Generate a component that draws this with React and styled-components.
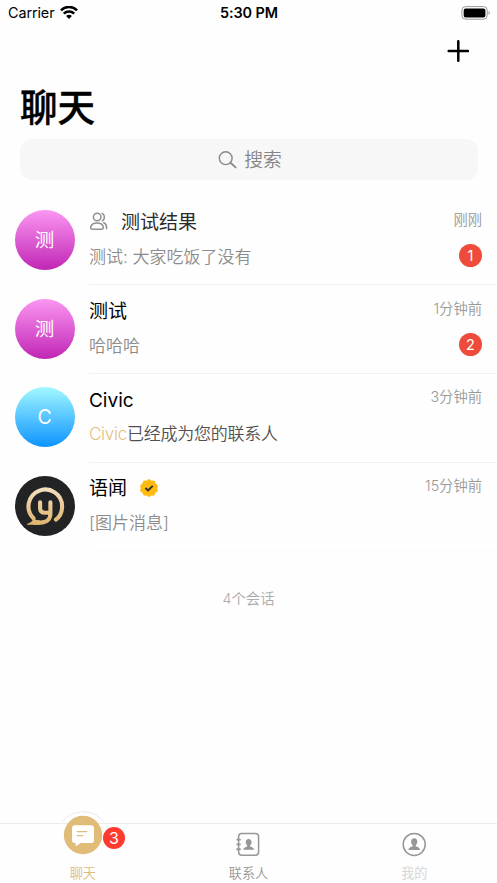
import React from "react"
import styled, {createGlobalStyle} from "styled-components"

const GlobalStyle = createGlobalStyle`
  * {
    box-sizing: border-box;
  }

  body {
    margin: 0;
    background: #fefefe;
    font-family: Inter, "Noto Sans CJK SC", sans-serif;
  }

  svg {
    display: block;
    flex: none;
  }
`;

const Screen = styled.div`
  display: flex;
  flex-direction: column;
  width: 497px;
  height: 883px;
  overflow: hidden;
  background: #fefefe;
`;

const StatusBar = styled.div`
  display: grid;
  grid-template-columns: 1fr auto 1fr;
  align-items: center;
  height: 25px;
  padding: 0 6px 0 8px;
  color: #000;
  font-size: 14.4px;
  line-height: 25px;
`;

const Carrier = styled.div`
  display: flex;
  align-items: center;
  gap: 6px;
  letter-spacing: -0.1px;
`;

const Clock = styled.span`
  font-weight: 600;
  letter-spacing: -0.05px;
  margin-left: -1px;
`;

const BatterySlot = styled.div`
  display: flex;
  justify-content: flex-end;
`;

const NavBar = styled.div`
  display: flex;
  align-items: center;
  justify-content: flex-end;
  height: 52px;
  padding-right: 28px;
`;

const Title = styled.h1`
  height: 62px;
  margin: 0;
  padding-left: 20px;
  color: #000;
  font-size: 37.6px;
  font-weight: 500;
  line-height: 62px;
  -webkit-text-stroke: 0.4px #000;
`;

const SearchBox = styled.div`
  display: flex;
  flex: none;
  align-items: center;
  justify-content: center;
  gap: 7px;
  height: 41px;
  margin: 0 19px 0 20px;
  padding-left: 2px;
  border-radius: 12px;
  background: #f7f7f7;
  color: #858587;
  font-size: 18.8px;
  font-weight: 350;
  line-height: 40px;
`;

const SearchText = styled.span`
  padding-top: 3px;
`;

const List = styled.div`
  display: flex;
  flex-direction: column;
  padding-top: 16.5px;
`;

const Row = styled.div`
  display: flex;
  height: 88.7px;
  padding-left: 14.6px;
  gap: 14.4px;
`;

const Avatar = styled.div`
  display: flex;
  flex: none;
  align-items: center;
  justify-content: center;
  width: 60px;
  height: 60px;
  margin-top: 13.5px;
  border-radius: 50%;
  overflow: hidden;
  background: ${props => props.$fill};
  color: white;
  font-size: 19.5px;
  font-weight: 400;
  line-height: 58px;
`;

const Body = styled.div`
  display: flex;
  flex: 1;
  flex-direction: column;
  padding: 10.5px 15px 0 0;
  border-bottom: 1px solid ${props => props.$last ? "#fbfbfb" : "#f1f1f1"};
`;

const Line = styled.div`
  display: flex;
  align-items: center;
  justify-content: space-between;
  height: ${props => props.$height}px;
`;

const Name = styled.div`
  display: flex;
  align-items: center;
  gap: 13px;
  color: ${props => props.$soft ? "#2b2b2b" : "#000"};
  font-size: 19px;
  line-height: 30px;
`;

const NameText = styled.span`
  padding-top: 2.5px;
`;

const Time = styled.span`
  color: #989898;
  font-size: 14.3px;
  font-weight: 350;
  line-height: 20px;
  margin-top: -4px;
`;

const Preview = styled.span`
  padding-top: 3px;
  color: ${props => props.$dark ? "#505050" : "#8c8c8c"};
  font-size: 17px;
  font-weight: 350;
  letter-spacing: ${props => props.$dark ? "-0.25px" : "0"};
  line-height: 26px;
`;

const Mention = styled.span`
  color: #e3bf7e;
`;

const Unread = styled.span`
  width: 23px;
  height: 23px;
  border-radius: 50%;
  background: #ee4b3a;
  color: white;
  font-size: 14.5px;
  line-height: 23px;
  text-align: center;
`;

const Summary = styled.div`
  flex: 1;
  padding-top: 38px;
  color: #acacac;
  font-size: 14.4px;
  font-weight: 350;
  line-height: 20px;
  text-align: center;
`;

const TabBar = styled.div`
  display: flex;
  flex: none;
  height: 60px;
  border-top: 1px solid #ececec;
`;

const Tab = styled.div`
  display: flex;
  flex: 1;
  flex-direction: column;
  align-items: center;
  justify-content: space-between;
  position: relative;
  padding: 8px 0 0;
  color: ${props => props.$color};
  font-size: 13.2px;
  font-weight: 350;
  line-height: 20px;
`;

const TabLabel = styled.span`
  height: 20px;
`;

/* the active tab's button rises above the bar's top edge */
const RaisedIcon = styled.div`
  position: absolute;
  top: -14px;
  left: 50%;
  transform: translateX(-50%);
`;

const TabSpacer = styled.div`
  height: 25px;
`;

const TabBadge = styled.span`
  position: absolute;
  top: 3px;
  left: 103px;
  width: 22px;
  height: 22px;
  border-radius: 50%;
  background: #ff3b30;
  color: white;
  font-size: 16px;
  font-weight: 400;
  line-height: 22px;
  text-align: center;
`;

const WifiIcon = () => (
  <svg width="18" height="14" viewBox="0 0 18 14" fill="none" stroke="#000" strokeWidth="2.5">
    <path d="M0.9 4.3C5.4 -0.2 12.6 -0.2 17.1 4.3"/>
    <path d="M3.8 7.6C6.7 4.8 11.3 4.8 14.2 7.6"/>
    <path d="M6.1 10C7.8 8.4 10.2 8.4 11.9 10L9 12.9Z" fill="#000" stroke="none"/>
  </svg>
);

const BatteryIcon = () => (
  <svg width="30" height="14" viewBox="0 0 30 14">
    <rect x="0.9" y="0.6" width="25.3" height="12.6" rx="3.6" fill="none" stroke="#999" strokeWidth="1"/>
    <rect x="2.7" y="2.4" width="21.7" height="9" rx="2" fill="#000"/>
    <path d="M27.6 5C29.3 5.6 29.3 8.2 27.6 8.8Z" fill="#999"/>
  </svg>
);

const PlusIcon = () => (
  <svg width="22" height="22" viewBox="0 0 22 22" stroke="#000" strokeWidth="2.5" strokeLinecap="round">
    <path d="M11.3 1.2V20.8M1.7 11H20.9"/>
  </svg>
);

const SearchIcon = () => (
  <svg width="19" height="18" viewBox="0 0 19 18" fill="none" stroke="#8a8a8c" strokeLinecap="round">
    <circle cx="7.7" cy="7.2" r="6.4" strokeWidth="1.4"/>
    <path d="M12.5 11.7L17.6 16.4" strokeWidth="1.9"/>
  </svg>
);

const GroupIcon = () => (
  <svg width="19" height="21" viewBox="0 0 19 21" fill="none" stroke="#909090" strokeWidth="1.5" strokeLinecap="round">
    <circle cx="8.2" cy="5" r="3.8"/>
    <path d="M3.4 17.3H12.6C14 17.3 14.6 16.4 14.3 15C13.5 12 11.1 11.1 8.1 11.1S2.6 12 1.7 15C1.4 16.4 2 17.3 3.4 17.3Z"/>
    <path d="M13.2 1.4C16.1 2.9 16.1 7.2 13.4 8.9M14.7 10.8C16.7 11.7 17.9 13.8 17.5 16.7"/>
  </svg>
);

const VerifiedIcon = () => (
  <svg width="18" height="18" viewBox="0 0 18 18">
    <path
      d="M9 0.3L11.5 1.9L14.3 1.9L15.4 4.6L17.6 6.5L17 9.2L17.6 12L15.3 13.7L14.1 16.3L11.3 16.3L9 17.8L6.7 16.3L3.9 16.3L2.7 13.7L0.4 12L1 9.2L0.4 6.5L2.6 4.6L3.7 1.9L6.5 1.9Z"
      fill="#ffb90f" stroke="#ffb90f" strokeWidth="0.6" strokeLinejoin="round"
    />
    <path d="M5.4 9L8.1 11.4L12.7 6.9" fill="none" stroke="#33312b" strokeWidth="1.9"/>
  </svg>
);

const LogoIcon = () => (
  <svg width="60" height="60" viewBox="0 0 60 60" fill="none">
    <defs>
      <linearGradient id="gold" x1="0" y1="11" x2="0" y2="49" gradientUnits="userSpaceOnUse">
        <stop offset="0" stopColor="#f6dfc2"/>
        <stop offset="1" stopColor="#deb46c"/>
      </linearGradient>
    </defs>
    <g stroke="url(#gold)" strokeWidth="4.1" strokeLinecap="round">
      <path d="M40.9 43.6C45 40.6 47.1 35.6 47.1 30.5A16.8 16.8 0 1 0 18.5 42.3"/>
      <path d="M25.1 26.2V32.3C25.1 35.2 27 36.8 30 36.8H35.4M35.4 26.2V37.5C35.4 43.5 31.5 46.6 25.5 46.6H19"/>
    </g>
    <path d="M16.8 40.5L21.2 43.9L25 44.5V48.7H12.4C11.8 48.7 11.8 48 12.4 47.8C15.1 46.8 16.8 45.7 17.7 44.2Z" fill="url(#gold)"/>
  </svg>
);

const ChatIcon = () => (
  <svg width="52" height="46" viewBox="0 0 52 46">
    <path d="M5 12C15.5 -1.5 36.5 -1.5 47 12Z" fill="#fefefe"/>
    <path d="M5 12C15.5 -1.5 36.5 -1.5 47 12" fill="none" stroke="#ececec"/>
    <circle cx="26" cy="25" r="19.2" fill="#e1bc79"/>
    <path d="M18.2 15.3H33.8C36 15.3 37 16.3 37 18.5V29.9C37 32.1 36 33.1 33.8 33.1H23.6L19.5 35.9C19 36.2 18.7 36 18.7 35.5V33.1H18.2C16 33.1 15 32.1 15 29.9V18.5C15 16.3 16 15.3 18.2 15.3Z" fill="#fff"/>
    <path d="M20.2 21.6H29.8M20.2 25.6H25.8" stroke="#e1bc79" strokeWidth="1.4" strokeLinecap="round"/>
  </svg>
);

const personPath = "M12 6.3C14.2 6.3 15.2 7.8 15.1 10C15 11.6 14.4 12.4 13.6 13V14.3C15.5 15 17.6 15.6 17.9 18H6.1C6.4 15.6 8.5 15 10.4 14.3V13C9.6 12.4 9 11.6 8.9 10C8.8 7.8 9.8 6.3 12 6.3Z";

const ContactsIcon = () => (
  <svg width="25" height="25" viewBox="0 0 25 25" fill="none" stroke="#979797" strokeWidth="1.5">
    <rect x="2.6" y="1.5" width="20" height="21.8" rx="3.2"/>
    <path d="M0.4 7.6H4.7M0.4 12.4H4.7M0.4 17.2H4.7" strokeWidth="1.9"/>
    <path d={personPath} transform="translate(1.5 1.1) scale(0.93)" fill="#979797" stroke="none"/>
  </svg>
);

const ProfileIcon = () => (
  <svg width="25" height="25" viewBox="0 0 25 25" fill="none" stroke="#979797" strokeWidth="1.5">
    <circle cx="12.2" cy="12.4" r="11"/>
    <path d={personPath} transform="translate(0.2 0)" fill="#979797" stroke="none"/>
  </svg>
);

const pink = "linear-gradient(#fb96f2, #c026b4)";
const blue = "linear-gradient(#a2f8ff, #0d93ff)";

const chats = [
  {
    name: "测试结果",
    avatar: "测",
    fill: pink,
    preview: "测试: 大家吃饭了没有",
    time: "刚刚",
    unread: 1,
    isGroup: true
  },
  {name: "测试", avatar: "测", fill: pink, preview: "哈哈哈", time: "1分钟前", unread: 2},
  {name: "Civic", avatar: "C", fill: blue, mention: "Civic", preview: "已经成为您的联系人", time: "3分钟前"},
  {name: "语闻", avatar: <LogoIcon/>, fill: "#222325", preview: "[图片消息]", time: "15分钟前", isVerified: true}
];

const ChatRow = ({chat, last}) => (
  <Row>
    <Avatar $fill={chat.fill}>{chat.avatar}</Avatar>
    <Body $last={last}>
      <Line $height={30}>
        <Name $soft={chat.isGroup}>
          {chat.isGroup && <GroupIcon/>}
          <NameText>{chat.name}</NameText>
          {chat.isVerified && <VerifiedIcon/>}
        </Name>
        <Time>{chat.time}</Time>
      </Line>
      <Line $height={37}>
        <Preview $dark={!!chat.mention}>
          {chat.mention && <Mention>{chat.mention}</Mention>}
          {chat.preview}
        </Preview>
        {chat.unread && <Unread>{chat.unread}</Unread>}
      </Line>
    </Body>
  </Row>
);

const App = () => {
  return (
    <Screen>
      <GlobalStyle/>
      <StatusBar>
        <Carrier>
          <span>Carrier</span>
          <WifiIcon/>
        </Carrier>
        <Clock>5:30 PM</Clock>
        <BatterySlot>
          <BatteryIcon/>
        </BatterySlot>
      </StatusBar>
      <NavBar>
        <PlusIcon/>
      </NavBar>
      <Title>聊天</Title>
      <SearchBox>
        <SearchIcon/>
        <SearchText>搜索</SearchText>
      </SearchBox>
      <List>
        {chats.map((chat, i) => (
          <ChatRow key={chat.name} chat={chat} last={i === chats.length - 1}/>
        ))}
      </List>
      <Summary>4个会话</Summary>
      <TabBar>
        <Tab $color="#e1bc79">
          <RaisedIcon>
            <ChatIcon/>
          </RaisedIcon>
          <TabSpacer/>
          <TabBadge>3</TabBadge>
          <TabLabel>聊天</TabLabel>
        </Tab>
        <Tab $color="#979797">
          <ContactsIcon/>
          <TabLabel>联系人</TabLabel>
        </Tab>
        <Tab $color="#d3d3d3">
          <ProfileIcon/>
          <TabLabel>我的</TabLabel>
        </Tab>
      </TabBar>
    </Screen>
  );
}

export default App;
